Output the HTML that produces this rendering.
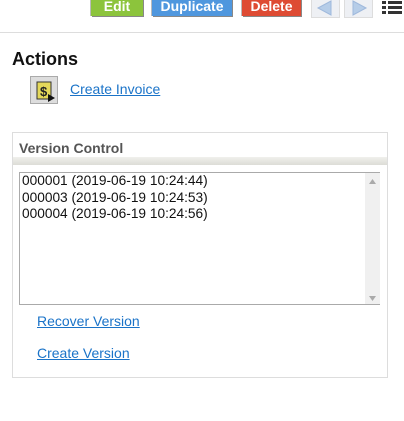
<!DOCTYPE html>
<html><head><style>
body{margin:0;width:404px;height:421px;background:#fff;font-family:"Liberation Sans",sans-serif;position:relative;overflow:hidden}
.a{position:absolute}
.btn{position:absolute;top:-2px;height:18px;color:#fff;font-weight:bold;font-size:14px;text-align:center;line-height:17px;box-shadow:1px 1px 0 #888, -1px 0 0 #bbb}
a{color:#1a73c8;text-decoration:underline;font-size:14px}
</style></head><body>
<div class="btn" style="left:91px;width:52px;background:#8cc43c">Edit</div>
<div class="btn" style="left:152px;width:80px;background:#4f97de">Duplicate</div>
<div class="btn" style="left:242px;width:59px;background:#de4b33">Delete</div>
<div class="a" style="left:311px;top:-2px;width:27px;height:18px;background:#eef0f4;border:1px solid #ddd"><svg width="27" height="18"><polygon points="6,9 19,2 19,16" fill="#b6cde8" stroke="#9fb9dc"/></svg></div>
<div class="a" style="left:344px;top:-2px;width:27px;height:18px;background:#eef0f4;border:1px solid #ddd"><svg width="27" height="18"><polygon points="21,9 8,2 8,16" fill="#b6cde8" stroke="#9fb9dc"/></svg></div>
<div class="a" style="left:382px;top:0;width:20px;height:16px"><svg width="20" height="16"><g fill="#333"><rect x="0" y="1" width="4" height="3"/><rect x="6" y="1" width="14" height="3"/><rect x="0" y="6" width="4" height="3"/><rect x="6" y="6" width="14" height="3"/><rect x="0" y="11" width="4" height="3"/><rect x="6" y="11" width="14" height="3"/></g></svg></div>
<div class="a" style="left:0;top:32px;width:404px;height:1px;background:#ddd"></div>
<div class="a" style="left:12px;top:49px;font-size:18px;font-weight:bold;color:#111">Actions</div>
<div class="a" style="left:30px;top:76px;width:28px;height:28px;background:#ddd;border:1px solid #aaa;box-sizing:border-box"><svg width="28" height="28"><rect x="6" y="5" width="14" height="17" fill="#e4d85a" stroke="#333"/><text x="9" y="19" font-size="13" font-weight="bold" fill="#222" font-family="Liberation Sans">$</text><polygon points="17,17 24,21 17,25" fill="#111"/></svg></div>
<a class="a" style="left:70px;top:81px">Create Invoice</a>
<div class="a" style="left:12px;top:132px;width:374px;height:244px;border:1px solid #ddd"></div>
<div class="a" style="left:19px;top:140px;font-size:14px;font-weight:bold;color:#555">Version Control</div>
<div class="a" style="left:13px;top:157px;width:374px;height:8px;background:linear-gradient(#f0f0ec,#dcdcd6)"></div>
<div class="a" style="left:19px;top:172px;width:361px;height:133px;border:1px solid #aaa;box-sizing:border-box;font-size:13.7px;color:#111;line-height:16.5px;padding:0 0 0 2px">000001 (2019-06-19 10:24:44)<br>000003 (2019-06-19 10:24:53)<br>000004 (2019-06-19 10:24:56)</div>
<div class="a" style="left:365px;top:173px;width:15px;height:131px;background:#f0f0f0"><svg width="15" height="131"><polygon points="4,11 11,11 7.5,6" fill="#aaa"/><polygon points="4,123 11,123 7.5,128" fill="#aaa"/></svg></div>
<a class="a" style="left:37px;top:313px">Recover Version</a>
<a class="a" style="left:37px;top:345px">Create Version</a>
</body></html>
